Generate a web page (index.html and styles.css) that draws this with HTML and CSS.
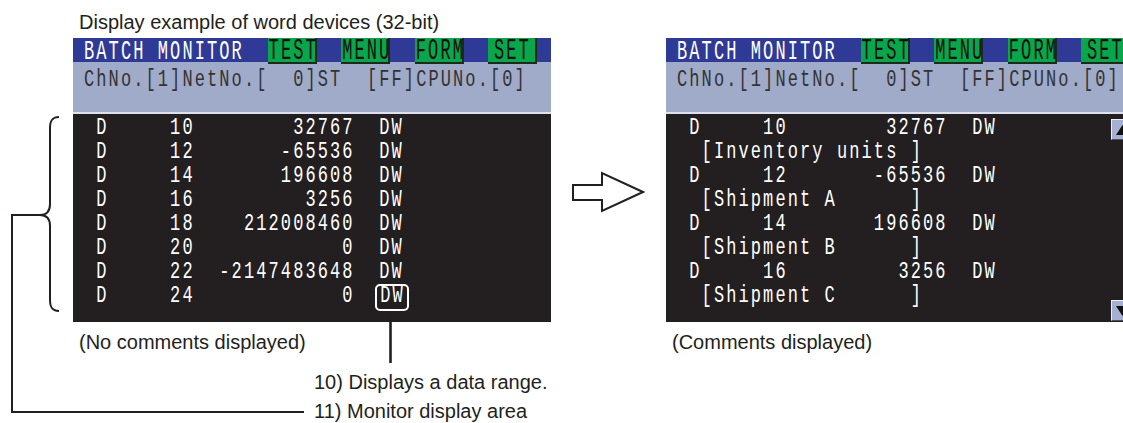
FILE: index.html
```html
<!DOCTYPE html>
<html lang="en">
<head>
    <meta charset="UTF-8">
    <meta name="viewport" content="width=device-width, initial-scale=1.0">
    <title>Batch Monitor - word devices</title>
    <link rel="stylesheet" href="styles.css">
</head>
<body>
    <div class="sheet">
        <!-- left: no comments -->
        <div class="figure figure-left">
            <p class="caption">Display example of word devices (32-bit)</p>
            <div class="screen">
                <div class="title-bar">
                    <span class="title"><span class="t">BATCH MONITOR</span></span>
                    <span class="key"><span class="t">TEST</span></span>
                    <span class="key"><span class="t">MENU</span></span>
                    <span class="key"><span class="t">FORM</span></span>
                    <span class="key"><span class="t">SET</span></span>
                </div>
                <div class="status"><span class="t">ChNo.[1]NetNo.[  0]ST  [FF]CPUNo.[0]</span></div>
                <div class="monitor">
                    <div class="rows">
                        <div class="row"><span class="t"> D     10        32767  DW</span></div>
                        <div class="row"><span class="t"> D     12       -65536  DW</span></div>
                        <div class="row"><span class="t"> D     14       196608  DW</span></div>
                        <div class="row"><span class="t"> D     16         3256  DW</span></div>
                        <div class="row"><span class="t"> D     18    212008460  DW</span></div>
                        <div class="row"><span class="t"> D     20            0  DW</span></div>
                        <div class="row"><span class="t"> D     22  -2147483648  DW</span></div>
                        <div class="row"><span class="t"> D     24            0  </span><span class="mark"><span class="t">DW</span></span></div>
                    </div>
                </div>
            </div>
            <p class="note">(No comments displayed)</p>
            <p class="callout callout-first">10) Displays a data range.</p>
            <p class="callout callout-last">11) Monitor display area</p>
        </div>

        <svg class="arrow" viewBox="571 0 74 423">
            <path d="M573 185 H602 V173 L643 192 L602 211 V200 H573 Z" fill="#fff" stroke="#231f20" stroke-width="2" stroke-linejoin="miter"/>
        </svg>

        <!-- right: with comments -->
        <div class="figure figure-right">
            <div class="screen">
                <div class="title-bar">
                    <span class="title"><span class="t">BATCH MONITOR</span></span>
                    <span class="key"><span class="t">TEST</span></span>
                    <span class="key"><span class="t">MENU</span></span>
                    <span class="key"><span class="t">FORM</span></span>
                    <span class="key"><span class="t">SET</span></span>
                </div>
                <div class="status"><span class="t">ChNo.[1]NetNo.[  0]ST  [FF]CPUNo.[0]</span></div>
                <div class="monitor">
                    <div class="rows">
                        <div class="row"><span class="t"> D     10        32767  DW</span></div>
                        <div class="row"><span class="t">  [Inventory units ]</span></div>
                        <div class="row"><span class="t"> D     12       -65536  DW</span></div>
                        <div class="row"><span class="t">  [Shipment A      ]</span></div>
                        <div class="row"><span class="t"> D     14       196608  DW</span></div>
                        <div class="row"><span class="t">  [Shipment B      ]</span></div>
                        <div class="row"><span class="t"> D     16         3256  DW</span></div>
                        <div class="row"><span class="t">  [Shipment C      ]</span></div>
                    </div>
                    <div class="scroll">
                        <span class="scroll-btn"><svg width="13" height="10" viewBox="0 0 13 10"><polygon points="6.5,0 13,10 0,10" fill="#111"/></svg></span>
                        <span class="scroll-btn"><svg width="13" height="10" viewBox="0 0 13 10"><polygon points="0,0 13,0 6.5,10" fill="#111"/></svg></span>
                    </div>
                </div>
            </div>
            <p class="note">(Comments displayed)</p>
        </div>

        <!-- brace and leader lines -->
        <svg class="leaders" viewBox="0 0 1123 423">
            <g fill="none" stroke="#231f20" stroke-width="2">
                <path d="M59 117 C52 117 50 121 50 128 L50 204 C50 211 47 215 40 215 C47 215 50 219 50 226 L50 300 C50 307 52 311 59 311"/>
                <path d="M40 215 H12 V412 H304"/>
                <path d="M390.5 311 V363" stroke-width="2.6"/>
            </g>
        </svg>
    </div>
</body>
</html>
```

FILE: styles.css
```css
body {
    margin: 0;
    background: #fff;
    font-family: "Liberation Sans", Arial, sans-serif;
    color: #231f20;
}

.sheet {
    position: relative;
    display: flex;
    align-items: flex-start;
    box-sizing: border-box;
    width: 1123px;
    height: 423px;
    padding-left: 73px;
    overflow: hidden;
}

.figure {
    flex: none;
    width: 478px;
}

.figure-left {
    padding-top: 10px;
}

.figure-right {
    padding-top: 38px;
}

.caption, .note, .callout {
    margin: 0;
    font-size: 20px;
    line-height: 24px;
    white-space: nowrap;
}

.caption {
    margin-bottom: 4px;
    padding-left: 6px;
}

.note {
    margin-top: 8px;
    padding-left: 6px;
}

.callout {
    padding-left: 241px;
}

.callout-first {
    margin-top: 16px;
}

.callout-last {
    margin-top: 5px;
}

.arrow {
    flex: none;
    width: 74px;
    height: 423px;
    margin: 0 21px 0 20px;
}

.leaders {
    position: absolute;
    left: 0;
    top: 0;
    width: 1123px;
    height: 423px;
    pointer-events: none;
}

/* GOT screen: narrow glyphs on a 12.3px grid, stretched tall */
.screen {
    font-family: "Liberation Mono", "DejaVu Sans Mono", monospace;
    font-size: 17px;
    letter-spacing: 2.1px;
    background: #231f20;
}

.t {
    display: inline-block;
    padding-left: 1px;
    line-height: 16px;
    white-space: pre;
    transform-origin: 50% calc(50% - 1.1px);
}

.title-bar {
    display: flex;
    align-items: flex-start;
    box-sizing: border-box;
    height: 24px;
    padding-left: 10px;
    background: #2f3a96;
    color: #fff;
}

.title {
    flex: none;
    width: 160px;
    margin-top: 2px;
    line-height: 24px;
}

    .title .t {
        transform: scaleY(1.6);
    }

.key {
    position: relative;
    flex: none;
    box-sizing: border-box;
    width: 49px;
    height: 26px;
    margin-left: 24.6px;
    padding-top: 1px;
    line-height: 24px;
    text-align: center;
    background: #0aa64b;
    color: #111;
    border-right: 2px solid #1b2a1d;
    border-bottom: 2px solid #1b2a1d;
}

    .key .t {
        transform: scaleY(1.75);
    }

.status {
    box-sizing: border-box;
    height: 52px;
    padding: 6px 0 0 10px;
    background: #a0aac9;
    border-bottom: 2px solid #dde1ee;
    color: #333;
    line-height: 24px;
}

    .status .t {
        transform: scaleY(1.43);
    }

.monitor {
    display: flex;
    height: 208px;
    color: #fff;
}

.rows {
    flex: 1;
    padding: 2px 0 0 10px;
}

.row {
    height: 24px;
    line-height: 24px;
}

    .row .t {
        transform: scaleY(1.43);
    }

.mark {
    position: relative;
    display: inline-block;
}

    .mark::after {
        content: "";
        position: absolute;
        left: -4px;
        right: -4px;
        top: 0;
        bottom: -3px;
        border: 2px solid #fff;
        border-radius: 5px;
    }

.scroll {
    display: flex;
    flex-direction: column;
    justify-content: space-between;
    padding: 5px 0 1px;
    margin-right: 10px;
}

.scroll-btn {
    display: flex;
    align-items: center;
    justify-content: center;
    box-sizing: border-box;
    width: 23px;
    height: 21px;
    background: #a6b0d2;
    border: 1px solid;
    border-color: #eef0f6 #4a4f63 #4a4f63 #eef0f6;
}
```
